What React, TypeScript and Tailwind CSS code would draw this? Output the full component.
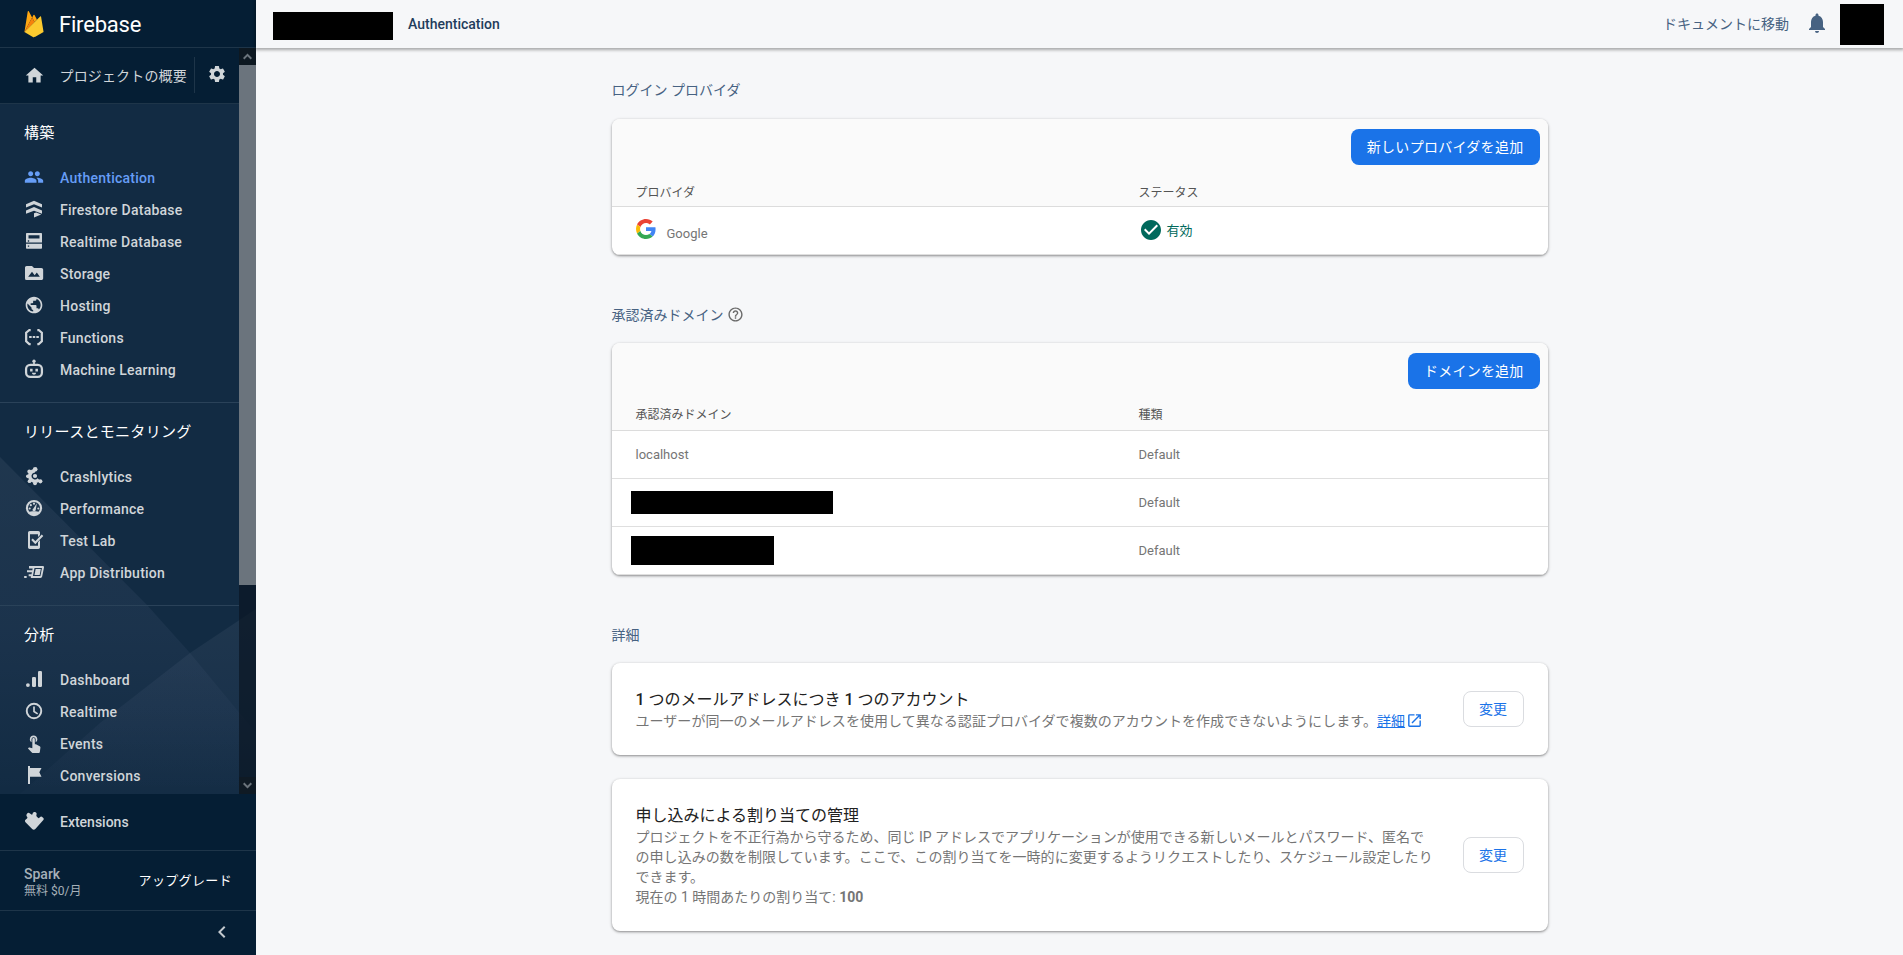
import type { ReactNode } from "react";
import {
  MdHome,
  MdSettings,
  MdPeople,
  MdPublic,
  MdTouchApp,
  MdNotifications,
  MdCheckCircle,
  MdHelpOutline,
  MdOpenInNew,
  MdChevronLeft,
} from "react-icons/md";

const Svg = ({ children }: { children: ReactNode }) => (
  <svg width="20" height="20" viewBox="0 0 24 24" fill="currentColor">
    {children}
  </svg>
);

const FirebaseLogo = () => (
  <svg width="30" height="30" viewBox="0 0 32 32" className="-ml-[5px]">
    <path fill="#ffa712" d="m5.8 24.6.2-.4 7.97-15.1-3.523-6.66a.6.6 0 0 0-1.133.206Z" />
    <path fill="#ffa50e" d="m16.537 13.9 2.559-2.62-2.559-4.88a.589.589 0 0 0-1.074-.047l-1.4 2.687-.042.138Z" />
    <path fill="#f6820c" d="m5.802 24.6.077-.078.279-.113L16.418 14.19l.13-.354-2.557-4.87Z" />
    <path fill="#fcca2f" d="m16.912 29.756 9.288-5.179L23.548 8.246a.567.567 0 0 0-.961-.311L5.802 24.6l8.5 5.122a2.674 2.674 0 0 0 2.609 0" />
    <path fill="#eeab37" d="M16.912 29.6a2.674 2.674 0 0 1-2.609 0L5.87 24.522l-.068.078 8.5 5.122a2.674 2.674 0 0 0 2.609 0l9.288-5.179-.023-.14Z" />
  </svg>
);

const GoogleLogo = () => (
  <svg width="20" height="20" viewBox="0 0 48 48">
    <path fill="#EA4335" d="M24 9.5c3.54 0 6.71 1.22 9.21 3.6l6.85-6.85C35.9 2.38 30.47 0 24 0 14.62 0 6.51 5.38 2.56 13.22l7.98 6.19C12.43 13.72 17.74 9.5 24 9.5z" />
    <path fill="#4285F4" d="M46.98 24.55c0-1.57-.15-3.09-.38-4.55H24v9.02h12.94c-.58 2.96-2.26 5.48-4.78 7.18l7.73 6c4.51-4.18 7.09-10.36 7.09-17.65z" />
    <path fill="#FBBC05" d="M10.53 28.59c-.48-1.45-.76-2.99-.76-4.59s.27-3.14.76-4.59l-7.98-6.19C.92 16.46 0 20.12 0 24c0 3.88.92 7.54 2.56 10.78l7.97-6.19z" />
    <path fill="#34A853" d="M24 48c6.48 0 11.93-2.13 15.89-5.81l-7.73-6c-2.15 1.45-4.92 2.3-8.16 2.3-6.26 0-11.57-4.22-13.47-9.91l-7.98 6.19C6.51 42.62 14.62 48 24 48z" />
  </svg>
);

const Firestore = () => (
  <Svg>
    <path d="M12 2 21.6 6.2v4L12 6.4 2.4 10.2V6.2Z" />
    <path d="M12 9.6l9.6 4.2v4L12 14 2.4 17.8v-4Z" />
    <path d="M12 17.2l2.6-1 6 2.5L12 22.3Z" />
  </Svg>
);

const RealtimeDb = () => (
  <Svg>
    <path
      fillRule="evenodd"
      d="M3.6 2.4h16.8c.7 0 1.2.5 1.2 1.2v10.2H2.4V3.6c0-.7.5-1.2 1.2-1.2ZM5.4 5v4h13.2V5ZM4.6 11.2v1.6h1.6v-1.6Z"
    />
    <path fillRule="evenodd" d="M2.4 15.2h19.2v5c0 .7-.5 1.2-1.2 1.2H3.6c-.7 0-1.2-.5-1.2-1.2Zm2.2 2.2V19h1.6v-1.6Z" />
  </Svg>
);

const Storage = () => (
  <Svg>
    <path
      fillRule="evenodd"
      d="M3.2 3.6h6.4L12 6h8.8c1.2 0 2.2 1 2.2 2.2v10c0 1.2-1 2.2-2.2 2.2H3.2A2 2 0 0 1 1.2 18.2V5.8c0-1.2.8-2.2 2-2.2ZM5 16.6h14l-3.6-5.2-2.6 3.2-3.2-4.2Z"
    />
  </Svg>
);

const Functions = () => (
  <Svg>
    <path
      d="M8 3.6H6.4L2.6 6.8v10.4l3.8 3.2H8M16 3.6h1.6l3.8 3.2v10.4l-3.8 3.2H16"
      fill="none"
      stroke="currentColor"
      strokeWidth="2.7"
    />
    <path d="M6.2 10.8h3v2.4h-3zM10.5 10.8h3v2.4h-3zM14.8 10.8h3v2.4h-3z" />
  </Svg>
);

const Robot = () => (
  <Svg>
    <rect x="2.5" y="7" width="19" height="14.5" rx="5" fill="none" stroke="currentColor" strokeWidth="2.7" />
    <circle cx="12" cy="2.6" r="2" />
    <path d="M11 4h2v3h-2zM7.3 11.6h3V15h-3zM13.7 11.6h3V15h-3zM9.4 16.6h5.2c-.3 1.5-1.3 2.2-2.6 2.2s-2.3-.7-2.6-2.2Z" />
  </Svg>
);

const Crashlytics = () => (
  <Svg>
    <path d="M13.2 5.7a6.3 6.3 0 1 0 4.7 10.5" fill="none" stroke="currentColor" strokeWidth="4.2" />
    <circle cx="13.2" cy="12" r="2.5" />
    <circle cx="13.4" cy="4" r="2.8" />
    <circle cx="6.4" cy="6.6" r="2.4" />
    <circle cx="4.6" cy="12.4" r="2.2" />
    <circle cx="6.6" cy="18.2" r="2.2" />
    <circle cx="13.2" cy="20.8" r="2.3" />
    <circle cx="19.6" cy="18.4" r="2.5" />
  </Svg>
);

const Performance = () => (
  <Svg>
    <circle cx="12" cy="12" r="8.5" fill="none" stroke="currentColor" strokeWidth="2.5" />
    <path d="M5 17.2c2-.9 4-1.2 7-1.2s5 .3 7 1.200c-1.500 2.300-4 3.800-7 3.800s-5.500-1.500-7-3.800Z" />
    <path d="M10 14.500a2.200 2.200 0 0 0 4 .2L15.400 6.400Z" />
    <circle cx="6.8" cy="12.6" r="1.3" />
    <circle cx="8.2" cy="8.6" r="1.3" />
    <circle cx="12" cy="6.8" r="1.3" />
    <circle cx="17.2" cy="12.6" r="1.3" />
  </Svg>
);

const TestLab = () => (
  <Svg>
    <path
      fillRule="evenodd"
      d="M6.8 1.2h10.4c1.1 0 2 .9 2 2v2.7l-2.400 2.400V5H7.200v14h9.600v-4.400l2.400-2.600v8.800c0 1.100-.9 2-2 2H6.800c-1.100 0-2-.9-2-2V3.200c0-1.100.9-2 2-2Z"
    />
    <path d="m9.6 11.2 4 4 8.600-9" fill="none" stroke="currentColor" strokeWidth="2.6" />
  </Svg>
);

const AppDistribution = () => (
  <svg width="20" height="20" viewBox="0 0 24 24" fill="currentColor" className="overflow-visible">
    <path
      fillRule="evenodd"
      d="M8.4 4.8H22.600c1 0 1.600.8 1.400 1.700l-2.200 11c-.2 1-1 1.700-2 1.700H8.200V17H5.600v-2.400H9l.5-2.400H3.600V9.800H10l.4-2H6V4.800ZM12.600 7.200l-1.900 9.600h9l1.900-9.600Z"
    />
    <path d="M14 8.400h6.200l-1.400 7.200h-6.200zM.2 16.800h3v2.400h-3z" />
  </svg>
);

const Dashboard = () => (
  <Svg>
    <circle cx="4.7" cy="19.3" r="2.3" />
    <rect x="9.6" y="9.6" width="4.8" height="12" rx="1.5" />
    <rect x="16.8" y="2.4" width="4.8" height="19.2" rx="1.5" />
  </Svg>
);

const Clock = () => (
  <Svg>
    <circle cx="12" cy="12" r="8.7" fill="none" stroke="currentColor" strokeWidth="2.3" />
    <path d="M12 6.600v6l4.400 2.800" fill="none" stroke="currentColor" strokeWidth="2" />
  </Svg>
);

const Flag = () => (
  <Svg>
    <path d="M4.8 1.2h2.4v2.4h13.800L18.400 8.800 21 14.200H7.200v8.600H4.800Z" />
  </Svg>
);

const Extensions = () => (
  <Svg>
    <path d="M3.400 3.500a2.500 2.500 0 0 1 3.800-.4l1.700 1.200c.7.400 1.200 0 1.300-.7a2.500 2.500 0 0 1 4.700-1.100c.7 1.300-.1 2.100-.1 3 0 .7.400 1.100 1 1.700l1 1c.8.700 1.600.3 2.300-.6.800-1.200 2-1.200 3.100-.2l1 .9c.7.700.7 1.800 0 2.500l-9.600 10.800c-1.100 1.300-2.600 1.300-3.800.1L1.800 13.500c-.9-.9-.9-2 0-2.900L3.600 9c.7-.7.600-1.300.1-2.100-.8-1-1.200-2.200-.3-3.400Z" />
  </Svg>
);

type Item = { label: string; icon: ReactNode; active?: boolean };

const sections: { title: string; items: Item[] }[] = [
  {
    title: "構築",
    items: [
      { label: "Authentication", icon: <MdPeople size={20} />, active: true },
      { label: "Firestore Database", icon: <Firestore /> },
      { label: "Realtime Database", icon: <RealtimeDb /> },
      { label: "Storage", icon: <Storage /> },
      { label: "Hosting", icon: <MdPublic size={20} /> },
      { label: "Functions", icon: <Functions /> },
      { label: "Machine Learning", icon: <Robot /> },
    ],
  },
  {
    title: "リリースとモニタリング",
    items: [
      { label: "Crashlytics", icon: <Crashlytics /> },
      { label: "Performance", icon: <Performance /> },
      { label: "Test Lab", icon: <TestLab /> },
      { label: "App Distribution", icon: <AppDistribution /> },
    ],
  },
  {
    title: "分析",
    items: [
      { label: "Dashboard", icon: <Dashboard /> },
      { label: "Realtime", icon: <Clock /> },
      { label: "Events", icon: <MdTouchApp size={20} /> },
      { label: "Conversions", icon: <Flag /> },
    ],
  },
];

function NavItem({ label, icon, active }: Item) {
  return (
    <div
      className={
        active
          ? "flex h-8 items-center gap-4 pl-6 text-[14px] font-medium text-[#669df6]"
          : "flex h-8 items-center gap-4 pl-6 text-[14px] font-medium text-[#d0d5d9]"
      }
    >
      {icon}
      <span className="pt-0.5 leading-5">{label}</span>
    </div>
  );
}

function Scrollbar() {
  return (
    <div className="flex w-[17px] shrink-0 flex-col bg-[#0a1622]/70">
      <div className="flex h-[17px] items-center justify-center bg-[#0d1821] text-[#6b747c]">
        <svg width="9" height="7" viewBox="0 0 9 7" fill="none" stroke="currentColor" strokeWidth="2">
          <path d="M.7 5.700 4.500 1.900l3.800 3.800" />
        </svg>
      </div>
      <div className="h-[520px] bg-[#6b747d]" />
      <div className="flex-1" />
      <div className="flex h-[17px] items-center justify-center bg-[#0f1a24] text-[#6b747c]">
        <svg width="9" height="7" viewBox="0 0 9 7" fill="none" stroke="currentColor" strokeWidth="2">
          <path d="M.7 1.300 4.500 5.100l3.800-3.800" />
        </svg>
      </div>
    </div>
  );
}

function Sidebar() {
  return (
    <aside className="flex h-full w-64 shrink-0 flex-col bg-[#051e34]">
      <div className="flex h-12 shrink-0 items-center gap-[10px] border-b border-[#1e3549] pl-6 text-white">
        <FirebaseLogo />
        <span className="pt-0.5 text-[22px] leading-7 tracking-[-0.2px]">Firebase</span>
      </div>
      <div className="relative flex h-[746px] shrink-0 overflow-hidden">
        <svg className="absolute inset-0" width="256" height="746" viewBox="0 0 256 746">
          <defs>
            <linearGradient id="facetA" x1="0" y1="0" x2="0" y2="1">
              <stop offset="0" stopColor="#f0f0ff" stopOpacity="0.06" />
              <stop offset="0.5" stopColor="#ccccff" stopOpacity="0.05" />
              <stop offset="1" stopColor="#ccccff" stopOpacity="0" />
            </linearGradient>
            <linearGradient id="facetB" x1="0" y1="0" x2="0" y2="1">
              <stop offset="0" stopColor="#f0f0ff" stopOpacity="0.06" />
              <stop offset="0.6" stopColor="#ccccff" stopOpacity="0.04" />
              <stop offset="1" stopColor="#ccccff" stopOpacity="0.01" />
            </linearGradient>
          </defs>
          <rect width="256" height="746" fill="#122b43" />
          <path d="M0 409 147 557 190 605 256 685V746H0Z" fill="url(#facetA)" />
          <path d="M256 561 190 605 100 675 20 746H256Z" fill="url(#facetB)" />
        </svg>
        <nav className="relative flex min-w-0 flex-1 flex-col tracking-[0.25px]">
          <div className="flex h-14 shrink-0 items-center border-b border-[#1e3549] bg-[#051e34] text-[#d0d5d9]">
            <div className="flex w-[194px] items-center pl-6">
              <MdHome size={21} className="-ml-[0.5px] -mt-px" />
              <span className="ml-[15px] whitespace-nowrap text-[14px] leading-5 tracking-[0.15px]">プロジェクトの概要</span>
            </div>
            <div className="-mt-0.5 flex h-9 flex-1 items-center border-l border-[#1e3549] pl-3">
              <MdSettings size={20} className="-mt-0.5" />
            </div>
          </div>
          {sections.map((s, i) => (
            <div key={s.title} className={i < 2 ? "border-b border-[#2a4259] pb-[17px]" : "pb-[3px]"}>
              <h2 className="flex h-[57px] items-center pl-6 pt-px text-[15px] font-normal leading-5 tracking-[0.3px] text-white">
                {s.title}
              </h2>
              {s.items.map((it) => (
                <NavItem key={it.label} {...it} />
              ))}
            </div>
          ))}
        </nav>
        <div className="relative flex">
          <Scrollbar />
        </div>
      </div>
      <div className="-mt-px flex h-[58px] shrink-0 items-center border-y border-[#1e3549] border-t-[#2a4259] pb-0.5">
        <NavItem label="Extensions" icon={<Extensions />} />
      </div>
      <div className="flex h-[60px] shrink-0 items-center justify-between border-b border-[#1e3549] pl-6 pr-6">
        <div className="pt-0.5 text-[#a6b0b8]">
          <div className="text-[14px] font-medium leading-[18px]">Spark</div>
          <div className="text-[12px] leading-4">無料 $0/月</div>
        </div>
        <span className="text-[13px] leading-5 tracking-[0.35px] text-white">アップグレード</span>
      </div>
      <div className="flex flex-1 items-center justify-end pb-0.5 pr-[22px] text-[#c3c9ce]">
        <MdChevronLeft size={24} />
      </div>
    </aside>
  );
}

const cardShadow = "rounded-lg bg-white shadow-[0_1px_2px_0_rgba(0,0,0,0.3),0_1px_3px_1px_rgba(0,0,0,0.12)]";

function TableCard({
  action,
  columns,
  rows,
  raised,
}: {
  action: string;
  columns: [string, string];
  rows: [ReactNode, ReactNode][];
  raised?: boolean;
}) {
  return (
    <section className={cardShadow + " overflow-hidden"}>
      <div className="flex h-14 items-center justify-end bg-[#fafafa] pr-2">
        <button
          className={
            raised
              ? "h-9 rounded-lg bg-[#1a73e8] px-4 text-[14px] leading-5 tracking-[0.2px] text-white"
              : "h-9 rounded-lg bg-[#1a73e8] px-4 text-[14px] leading-5 tracking-[0.3px] text-white"
          }
        >
          {action}
        </button>
      </div>
      <div
        className={
          raised
            ? "flex h-8 border-b border-[#dcdcdc] bg-[#fafafa] pt-[6px] text-[12px] leading-5 text-[#545454]"
            : "flex h-8 border-b border-[#dcdcdc] bg-[#fafafa] pt-2 text-[12px] leading-5 text-[#545454]"
        }
      >
        <div className="w-[527px] pl-6">{columns[0]}</div>
        <div>{columns[1]}</div>
      </div>
      {rows.map((r, i) => (
        <div key={i} className="flex h-12 items-center border-b border-[#dfdfdf] text-[13px] text-[#757575]">
          <div className="flex w-[527px] items-center pl-6">{r[0]}</div>
          <div className="flex items-center">{r[1]}</div>
        </div>
      ))}
    </section>
  );
}

function SettingCard({ title, children }: { title: ReactNode; children: ReactNode }) {
  return (
    <section className={cardShadow + " flex items-center justify-between p-6"}>
      <div>
        <h3 className="h-6 pt-px text-[16px] font-normal leading-6 text-[#212121]">{title}</h3>
        <div className="whitespace-nowrap text-[14px] leading-5 text-[#757575]">{children}</div>
      </div>
      <button className="h-9 w-[61px] rounded-lg border border-[#dadce0] text-[14px] leading-5 text-[#1a73e8]">変更</button>
    </section>
  );
}

const SectionTitle = ({ children }: { children: ReactNode }) => (
  <h2 className="mb-4 flex h-6 items-center text-[14px] font-normal leading-6 text-[#476282]">{children}</h2>
);

export default function App() {
  return (
    <div className="flex h-[955px] w-[1903px] overflow-hidden bg-[#f6f7f9] font-[Roboto,'Noto_Sans_CJK_JP',sans-serif]">
      <Sidebar />
      <div className="flex min-w-0 flex-1 flex-col">
        <header className="flex h-12 shrink-0 items-center pl-[17px] pr-[19px] shadow-[0_1px_3px_1px_rgba(0,0,0,0.32)]">
          <div className="mt-1 h-7 w-[120px] bg-black" />
          <span className="ml-[15px] text-[14px] font-medium leading-5 text-[#1f3d5c]">Authentication</span>
          <div className="ml-auto flex items-center text-[#476282]">
            <span className="text-[14px] leading-5">ドキュメントに移動</span>
            <MdNotifications size={24} className="ml-4 -mt-0.5" />
            <div className="ml-[11px] h-[41px] w-11 bg-black" />
          </div>
        </header>
        <main className="ml-[355.5px] w-[936px] pt-[31px]">
          <SectionTitle>
            <span className="-mt-0.5">ログイン プロバイダ</span>
          </SectionTitle>
          <TableCard
            action="新しいプロバイダを追加"
            columns={["プロバイダ", "ステータス"]}
            rows={[
              [
                <>
                  <span className="-mt-1">
                    <GoogleLogo />
                  </span>
                  <span className="ml-[11px] mt-[7px]">Google</span>
                </>,
                <span className="flex items-center text-[#00695c]">
                  <MdCheckCircle size={24} className="-mt-0.5" />
                  <span className="ml-1 leading-5">有効</span>
                </span>,
              ],
            ]}
          />
          <div className="h-12" />
          <SectionTitle>
            承認済みドメイン
            <MdHelpOutline size={17} className="-mt-0.5 ml-[3px] text-[#6a6a6a]" />
          </SectionTitle>
          <TableCard
            raised
            action="ドメインを追加"
            columns={["承認済みドメイン", "種類"]}
            rows={[
              ["localhost", "Default"],
              [<div className="-ml-[5px] h-[23px] w-[202px] bg-black" />, "Default"],
              [<div className="-ml-[5px] h-[29px] w-[143px] bg-black" />, "Default"],
            ]}
          />
          <div className="h-12" />
          <SectionTitle>詳細</SectionTitle>
          <div className="flex flex-col gap-6">
            <SettingCard
              title={
                <>
                  <span className="font-medium">1</span> つのメールアドレスにつき <span className="font-medium">1</span> つのアカウント
                </>
              }
            >
              <div className="flex items-center tracking-[0.045px]">
                ユーザーが同一のメールアドレスを使用して異なる認証プロバイダで複数のアカウントを作成できないようにします。
                <a className="text-[#1a73e8] underline">詳細</a>
                <MdOpenInNew size={17} className="-mt-0.5 ml-px text-[#1a73e8]" />
              </div>
            </SettingCard>
            <SettingCard title="申し込みによる割り当ての管理">
              プロジェクトを不正行為から守るため、同じ IP アドレスでアプリケーションが使用できる新しいメールとパスワード、匿名で
              <br />
              <span className="tracking-[0.06px]">
                の申し込みの数を制限しています。ここで、この割り当てを一時的に変更するようリクエストしたり、スケジュール設定したり
              </span>
              <br />
              できます。
              <br />
              現在の 1 時間あたりの割り当て: <b className="font-bold">100</b>
            </SettingCard>
          </div>
        </main>
      </div>
    </div>
  );
}
